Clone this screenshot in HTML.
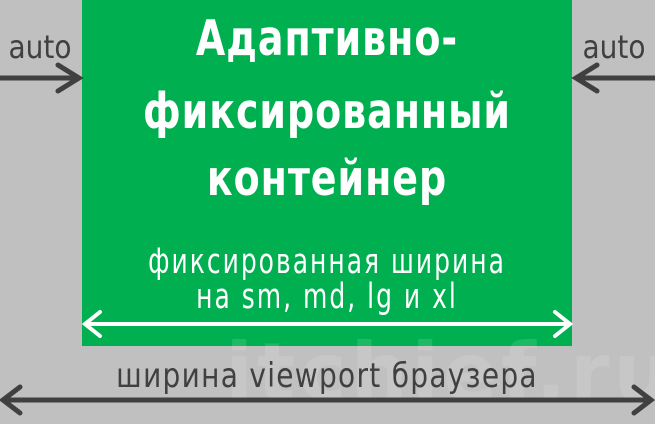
<!DOCTYPE html><html><head><meta charset="utf-8"><style>
body{margin:0;width:655px;height:424px;background:#c0c0c0;overflow:hidden}
svg{position:absolute;left:0;top:0;font-family:"DejaVu Sans","Liberation Sans",sans-serif}
</style></head><body>
<svg width="655" height="424" fill="none" stroke-linecap="round">
<rect x="82" y="0" width="490" height="346" fill="#00b050"/>
<text x="450" y="400" text-anchor="middle" font-size="80" font-weight="bold" fill="#fff" fill-opacity="0.12" letter-spacing="4">itchief.ru</text>
<g fill="#fff" text-anchor="middle" font-weight="bold" font-size="40" letter-spacing="1">
<text transform="translate(327,55) scale(0.95,1.23)">Адаптивно-</text>
<text transform="translate(327,128) scale(0.95,1.23)">фиксированный</text>
<text transform="translate(327,195) scale(0.95,1.23)">контейнер</text>
</g>
<g fill="#fff" text-anchor="middle" font-size="25" letter-spacing="2">
<text transform="translate(327,273) scale(1,1.4)">фиксированная ширина</text>
<text transform="translate(327,308) scale(1,1.4)">на sm, md, lg и xl</text>
</g>
<g fill="#404040" text-anchor="middle" font-size="28">
<text transform="translate(40,58) scale(1,1.15)">auto</text>
<text transform="translate(614,58) scale(1,1.15)">auto</text>
<text transform="translate(327,387) scale(1,1.2)" font-size="28" letter-spacing="1.3">ширина viewport браузера</text>
</g>
<g stroke="#404040" stroke-width="5">
<path d="M0 78H78M58 65L79 78L58 91"/>
<path d="M577 78H655M597 65L576 78L597 91"/>
<path d="M3 400H651M20 387L3 400L20 413M634 387L651 400L634 413"/>
</g>
<g stroke="#fff" stroke-width="4">
<path d="M85 324H570M100 312L85 324L100 336M555 312L570 324L555 336"/>
</g>
</svg>
</body></html>
